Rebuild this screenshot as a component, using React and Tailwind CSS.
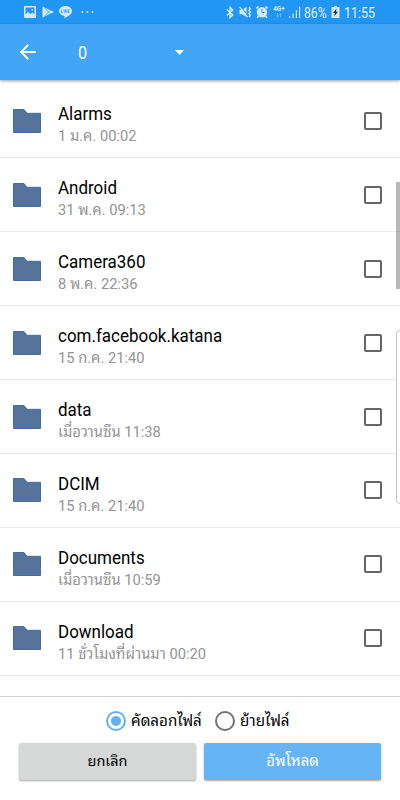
const files = [
  { name: 'Alarms', date: '1 ม.ค. 00:02' },
  { name: 'Android', date: '31 พ.ค. 09:13' },
  { name: 'Camera360', date: '8 พ.ค. 22:36' },
  { name: 'com.facebook.katana', date: '15 ก.ค. 21:40' },
  { name: 'data', date: 'เมื่อวานซืน 11:38' },
  { name: 'DCIM', date: '15 ก.ค. 21:40' },
  { name: 'Documents', date: 'เมื่อวานซืน 10:59' },
  { name: 'Download', date: '11 ชั่วโมงที่ผ่านมา 00:20' },
]

function StatusBar() {
  return (
    <div className="h-6 shrink-0 flex items-center justify-between bg-[#2196f3] pl-6 pr-[25px] text-[#d3ecfd]">
      <div className="flex items-center">
        <svg className="w-3 h-3" viewBox="0 0 12 12">
          <path
            fill="currentColor"
            fillRule="evenodd"
            d="M1 0h10a1 1 0 011 1v10a1 1 0 01-1 1H1a1 1 0 01-1-1V1a1 1 0 011-1zM1.5 1.5v7L4 6l2.500 2L8.500 6.500l2 2v-7zM7.500 3H9v1.500H7.500z"
          />
        </svg>
        <svg className="w-3 h-3 ml-[6px]" viewBox="0 0 12 12">
          <path fill="currentColor" d="M.5.5L12 6 .5 11.500z" />
          <path d="M2.500 1.800L8.500 8M2.500 10.200L8.500 4" stroke="#2196f3" strokeWidth=".7" fill="none" />
        </svg>
        <svg className="w-[13px] h-3 ml-[5px]" viewBox="0 0 13 12">
          <path fill="currentColor" d="M6.500 0C2.900 0 0 2.300 0 5.100c0 2.600 2.300 4.500 5.500 5V12C9 11 13 8 13 5.100 13 2.300 10.100 0 6.500 0z" />
          <path d="M2.500 3.600v3h1.600M5.200 3.600v3M6.300 6.600v-3l1.600 3v-3M10.600 3.600H9.200v3h1.400M9.200 5.100h1.300" stroke="#2196f3" strokeWidth=".7" fill="none" />
        </svg>
        <svg className="w-[14px] h-1 ml-[9px]" viewBox="0 0 14 4" fill="currentColor">
          <circle cx="1.500" cy="2" r="1" />
          <circle cx="6.500" cy="2" r="1" />
          <circle cx="11.500" cy="2" r="1" />
        </svg>
      </div>
      <div className="flex items-center">
        <svg className="w-2 h-[13px]" viewBox="0 0 8 13" fill="none" stroke="currentColor" strokeWidth="1.400">
          <path d="M.8 3.500L6.800 9 4 11.600V1.400L6.800 4 .8 9.500" />
        </svg>
        <svg className="w-[13px] h-3 ml-[5px]" viewBox="0 0 13 12">
          <path fill="currentColor" d="M.5 3.800H3L7.500 1v10L3 8.200H.5z" />
          <path d="M1.800.3l7.600 10" stroke="#2196f3" strokeWidth="1" />
          <path d="M.6.8l8 10.400" stroke="currentColor" strokeWidth="1.200" />
          <path d="M10 1l1.300 1.700L10 4.300 11.300 6 10 7.700l1.300 1.600L10 11" stroke="currentColor" strokeWidth="1.400" fill="none" />
        </svg>
        <svg className="w-3 h-3 ml-1" viewBox="0 0 12 12">
          <circle cx="6" cy="6.200" r="5.200" fill="currentColor" />
          <path d="M.5 2.500l2-2M11.500 2.500l-2-2M2.500 10l-1.300 1.700M9.500 10l1.300 1.700" stroke="currentColor" strokeWidth="1.700" />
          <path d="M6 3.200v3.300h2.600" stroke="#2196f3" strokeWidth="1" fill="none" />
        </svg>
        <div className="w-3 h-3 ml-[5px] flex flex-col items-center">
          <span className="text-[6.500px] leading-[7px] font-bold">4G+</span>
          <svg className="w-[6px] h-1" viewBox="0 0 6 4" fill="none" stroke="currentColor" strokeWidth=".7" opacity=".6">
            <path d="M1.500 0v3.500M.5 2.500l1 1 1-1M4.500 4V.5M3.500 1.500l1-1 1 1" />
          </svg>
        </div>
        <svg className="w-3 h-3 ml-1" viewBox="0 0 12 12" fill="currentColor">
          <path d="M.2 10h1v2h-1zM3.500 7.500h1.100V12H3.500zM6.800 4h1.100v8H6.800zM10 .5h1.100V12H10z" />
        </svg>
        <span className="ml-[3px] w-[23px] text-[14.500px] leading-6 whitespace-nowrap text-[#e0f2ff]">
          <span className="inline-block origin-left scale-x-[.84] translate-y-[1.500px]">86%</span>
        </span>
        <svg className="w-[9px] h-3 ml-1" viewBox="0 0 9 12">
          <path fill="currentColor" d="M3 0h3v1h2.500v11H.5V1H3z" />
          <path fill="#102b45" d="M5.500 2.500L2 7h2l-.7 3.300L7 5.800H5z" />
        </svg>
        <span className="ml-1 w-[31px] text-[14.500px] leading-6 whitespace-nowrap text-[#e0f2ff]">
          <span className="inline-block origin-left scale-x-[.86] translate-y-[1.500px]">11:55</span>
        </span>
      </div>
    </div>
  )
}

function AppBar() {
  return (
    <div className="relative h-14 shrink-0 flex items-center bg-[#42a5f5] text-white shadow-[0_1px_3px_rgba(0,0,0,0.4)]">
      <svg className="w-4 h-4 ml-[19.500px]" viewBox="0 0 16 16" fill="none" stroke="currentColor" strokeWidth="1.900">
        <path d="M8.200.8L1.200 8l7 7.200M1.200 8h14.600" />
      </svg>
      <span className="ml-[42px] w-[96px] text-[18px] leading-6">
        <span className="inline-block origin-left scale-x-[.9] translate-y-px">0</span>
      </span>
      <svg className="w-[9px] h-[5px] ml-px" viewBox="0 0 9 5" fill="currentColor">
        <path d="M0 0h9L4.500 5z" />
      </svg>
    </div>
  )
}

function FileRow({ name, date }) {
  return (
    <div className="h-[73.900px] shrink-0 flex items-center border-b border-[#ebebeb] pl-[13px] pr-[18px]">
      <svg className="w-7 h-6 shrink-0" viewBox="0 0 28 24">
        <path d="M.5.500h10.500l3 3.800h13.500v19.200H.5z" fill="#55739b" stroke="#486d9d" />
      </svg>
      <div className="ml-[17px] flex-1 pt-[7px]">
        <p className="h-6 text-[17.500px] leading-6 text-black whitespace-nowrap">
          <span className="inline-block origin-left scale-x-[.97]">{name}</span>
        </p>
        <p className="h-5 text-[15px] leading-5 text-[#949494] whitespace-nowrap">
          <span className="inline-block origin-left scale-x-[.98]">{date}</span>
        </p>
      </div>
      <span className="w-[18px] h-[18px] shrink-0 rounded-[2px] border-2 border-[#666]" />
    </div>
  )
}

function Footer() {
  return (
    <div className="h-[104px] shrink-0 border-t border-[#cfcfcf] bg-white">
      <div className="flex items-center h-12 pl-[106px] text-[15.200px] text-black">
        <span className="w-5 h-5 rounded-full border-2 border-[#64b1f1] flex items-center justify-center">
          <span className="w-[10px] h-[10px] rounded-full bg-[#64b1f1]" />
        </span>
        <span className="ml-[5px] w-[71px] whitespace-nowrap">คัดลอกไฟล์</span>
        <span className="w-5 h-5 ml-[13px] rounded-full border-2 border-[#737373]" />
        <span className="ml-[5px] whitespace-nowrap">ย้ายไฟล์</span>
      </div>
      <div className="flex -mt-[2px] pl-[19px] gap-2">
        <button className="w-[177px] h-[37px] rounded-[2px] bg-[#d6d7d7] text-[14.500px] text-black shadow-[0_1px_2px_rgba(0,0,0,0.35)]">
          ยกเลิก
        </button>
        <button className="w-[177px] h-[37px] rounded-[2px] bg-[#64b4f6] text-[15px] text-white shadow-[0_1px_2px_rgba(0,0,0,0.35)]">
          อัพโหลด
        </button>
      </div>
    </div>
  )
}

export default function App() {
  return (
    <div className="relative w-[400px] h-[800px] flex flex-col overflow-hidden bg-white font-[Roboto,'Noto_Sans_Thai_Looped','Noto_Looped_Thai','Droid_Sans_Thai',Loma,Waree,Garuda,sans-serif]">
      <StatusBar />
      <AppBar />
      <div className="flex-1 min-h-0 flex flex-col overflow-hidden pt-[4.500px]">
        {files.map((file) => (
          <FileRow key={file.name} name={file.name} date={file.date} />
        ))}
      </div>
      <Footer />

      {/* Scrollbar thumb and edge panel handle */}
      <div className="absolute right-0 top-[182px] w-1 h-[107px] bg-black/28" />
      <div className="absolute -right-1 top-[330px] w-2 h-[174px] rounded-[4px] border border-[#c4c4c4] bg-white" />
    </div>
  )
}
